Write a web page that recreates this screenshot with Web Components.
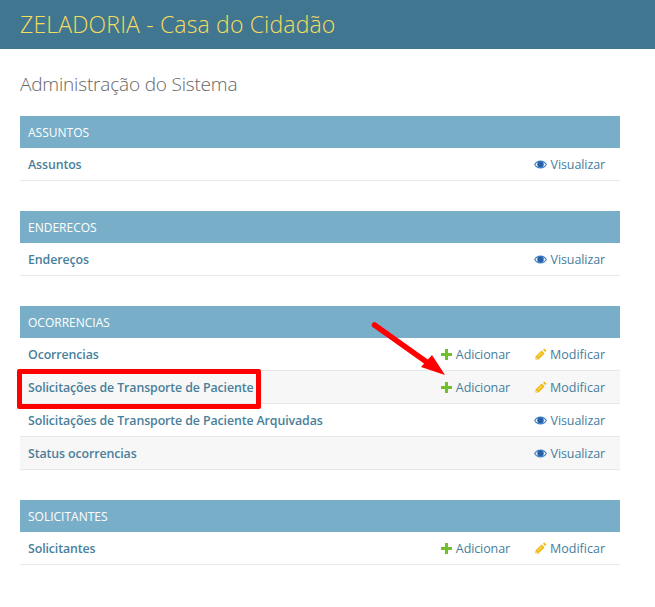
<!DOCTYPE html>
<html lang="pt-BR"><head><meta charset="utf-8"><title>Administração do Sistema</title>
<style>
html,body{margin:0;padding:0;background:#fff;color:#666;font-family:"Open Sans","Liberation Sans",sans-serif;overflow:hidden}
</style></head><body>
<admin-page>
  <site-header slot="header">ZELADORIA - Casa do Cidadão</site-header>
  <h1 slot="title">Administração do Sistema</h1>
  <app-module caption="Assuntos">
    <model-row name="Assuntos"><action-link kind="view"></action-link></model-row>
  </app-module>
  <app-module caption="Enderecos">
    <model-row name="Endereços"><action-link kind="view"></action-link></model-row>
  </app-module>
  <app-module caption="Ocorrencias">
    <model-row name="Ocorrencias"><action-link kind="add"></action-link><action-link kind="change"></action-link></model-row>
    <model-row name="Solicitações de Transporte de Paciente" alt><action-link kind="add"></action-link><action-link kind="change"></action-link></model-row>
    <model-row name="Solicitações de Transporte de Paciente Arquivadas"><action-link kind="view"></action-link></model-row>
    <model-row name="Status ocorrencias" alt><action-link kind="view"></action-link></model-row>
  </app-module>
  <app-module caption="Solicitantes">
    <model-row name="Solicitantes"><action-link kind="add"></action-link><action-link kind="change"></action-link></model-row>
  </app-module>
</admin-page>
<script>
const FONT='"Open Sans","Liberation Sans",sans-serif';
class AdminPage extends HTMLElement{constructor(){super();this.attachShadow({mode:'open'}).innerHTML=`
<style>
:host{display:block;position:relative;height:607px;overflow:hidden}
main{display:flex;flex-direction:column;padding:0 35px 0 20px}
::slotted(h1){margin:23px 0 20px;font:300 19px/24px ${FONT};color:#666;letter-spacing:-.18px}
.box{position:absolute;left:17px;top:369px;width:244px;height:40px;box-sizing:border-box;border:5px solid #f00;border-radius:2px;pointer-events:none}
svg.arrow{position:absolute;left:360px;top:310px;pointer-events:none}
</style>
<slot name="header"></slot>
<main><slot name="title"></slot><slot></slot></main>
<div class="box"></div>
<svg class="arrow" width="100" height="80" viewBox="0 0 100 80"><path d="M14.500 15 L68 53" stroke="#f00" stroke-width="5.500" stroke-linecap="round" fill="none"/><path d="M85 65 L61 57 L72 45Z" fill="#f00"/></svg>`;}}
class SiteHeader extends HTMLElement{constructor(){super();this.attachShadow({mode:'open'}).innerHTML=`
<style>:host{display:flex;align-items:center;height:49px;padding:0 20px;background:#417690;color:#f5dd5d;font:300 23px/1 ${FONT};letter-spacing:.16px}</style><slot></slot>`;}}
class AppModule extends HTMLElement{constructor(){super();this.attachShadow({mode:'open'}).innerHTML=`
<style>
:host{display:block;margin-bottom:30px}
.cap{height:30px;padding-top:2px;display:flex;align-items:center;padding-left:8px;padding-right:8px;background:#79aec8;color:#fff;font:400 12px/1 ${FONT};text-transform:uppercase}
</style><div class="cap"></div><slot></slot>`;}
connectedCallback(){this.shadowRoot.querySelector('.cap').textContent=this.getAttribute('caption');}}
class ModelRow extends HTMLElement{constructor(){super();this.attachShadow({mode:'open'}).innerHTML=`
<style>
:host{display:flex;align-items:center;height:30px;padding:2px 15px 0 8px;border-bottom:1px solid #e8e8e8;background:#fff;font:400 12.500px/1 ${FONT};color:#447e9b}
:host([alt]){background:#f7f7f7}
.name{flex:1;font-size:12.400px;font-weight:600;white-space:nowrap;letter-spacing:-.12px;color:#4a7f9a}
.acts{display:flex;justify-content:flex-end;gap:25px}
</style><span class="name"></span><span class="acts"><slot></slot></span>`;}
connectedCallback(){this.shadowRoot.querySelector('.name').textContent=this.getAttribute('name');}}
const ICONS={
add:['Adicionar',11,11,'<path fill="#70bf2b" d="M4 0h3v4h4v3H7v4H4V7H0V4h4z"/>'],
change:['Modificar',12,12,'<path fill="#efb80b" d="M9.300.5l2.200 2.200-1.300 1.300-2.200-2.200zM6.600 2.400l3 3-6.100 6.100H.5V8.500z"/><path fill="#f8dc88" d="M.5 8.500l3 3-3 .0zM6.400 4.400l.8.8-3.800 3.800-.8-.8z"/>'],
view:['Visualizar',13,11,'<path fill="#3f7fc4" fill-rule="evenodd" d="M0 5.500C1.500 2.900 3.800 1.500 6.500 1.500s5 1.400 6.500 4c-1.500 2.600-3.800 4-6.500 4S1.500 8.100 0 5.500zM1.300 5.500C2.500 7.200 4.300 8.400 6.500 8.400s4-1.200 5.200-2.900C11 4.500 10.100 3.700 9.100 3.200c.4.600.7 1.300.7 2a3.300 3.300 0 0 1-6.600 0c0-.7.300-1.400.7-2C2.900 3.700 2 4.500 1.300 5.500z"/><circle cx="6.500" cy="5.200" r="2.800" fill="#2b60a8"/>']};
class ActionLink extends HTMLElement{constructor(){super();this.attachShadow({mode:'open'});}
connectedCallback(){const k=this.getAttribute('kind'),[t,w,h,p]=ICONS[k];this.shadowRoot.innerHTML=`
<style>:host{display:inline-flex;align-items:center;gap:3px;white-space:nowrap}:host([kind=view]),:host([kind=add]){letter-spacing:-.1px;gap:4px}svg{display:block;flex:none;margin-top:-2px}</style>
<svg width="${w}" height="${h}" viewBox="0 0 ${w} ${h}">${p}</svg><span>${t}</span>`;}}
customElements.define('admin-page',AdminPage);
customElements.define('site-header',SiteHeader);
customElements.define('app-module',AppModule);
customElements.define('model-row',ModelRow);
customElements.define('action-link',ActionLink);
</script></body></html>
